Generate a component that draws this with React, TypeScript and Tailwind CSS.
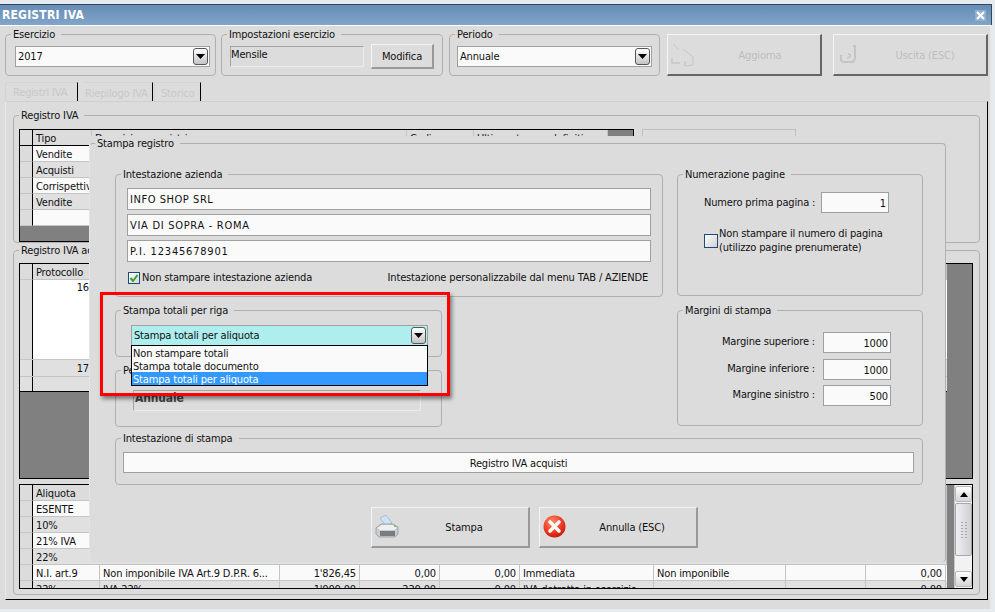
import React from "react";

const font = { fontFamily: '"DejaVu Sans Condensed", "DejaVu Sans", sans-serif', fontStretch: "condensed" as const };

function Group({ label, className, children }: { label: string; className: string; children?: React.ReactNode }) {
  return (
    <div className={"relative border border-[#b0b0b0] rounded-[4px] shrink-0 " + className}>
      <span className="absolute left-[5px] top-[-8px] bg-[#dcdcdc] pl-[2px] pr-[6px] leading-[16px] whitespace-nowrap text-[#111]">{label}</span>
      {children}
    </div>
  );
}

function Arrow() {
  return (
    <span className="flex w-[15px] h-[17px] shrink-0 items-center justify-center rounded-[3px] border border-[#555] bg-gradient-to-b from-white to-[#c4c4c8]">
      <svg width="9" height="5" viewBox="0 0 9 5"><path d="M0 0h9L4.5 5z" fill="#000" /></svg>
    </span>
  );
}

function Combo({ value, className, bg = "bg-[#fafafa]" }: { value: string; className: string; bg?: string }) {
  return (
    <div className={"flex items-center justify-between h-[21px] border border-[#a0a0a0] pl-[2px] pr-[1px] " + bg + " " + className}>
      <span className="leading-[16px] pt-[1px] text-[#111]">{value}</span>
      <Arrow />
    </div>
  );
}

function Input({ value, className }: { value: string; className: string }) {
  return (
    <div className={"h-[21px] border border-[#a0a0a0] bg-[#fafafa] px-[2px] leading-[21px] text-[#111] whitespace-nowrap overflow-hidden " + className}>{value}</div>
  );
}

function Btn({ label, className, icon, disabled }: { label: string; className: string; icon?: React.ReactNode; disabled?: boolean }) {
  return (
    <div
      className={
        "relative flex items-center justify-center shrink-0 bg-[#dcdcdc] border-t border-l border-t-[#f4f4f4] border-l-[#f4f4f4] border-b-2 border-r-2 " +
        (disabled ? "border-b-[#666] border-r-[#666] text-[#bcbcbc] " : "border-b-[#999] border-r-[#999] text-[#111] ") +
        className
      }
    >
      {icon}
      <span className="leading-[16px] pt-[2px]">{label}</span>
    </div>
  );
}

type Cell = { t?: string; r?: boolean };

function Row({ cells, widths, odd, last }: { cells: Cell[]; widths: string[]; odd?: boolean; last?: boolean }) {
  return (
    <div className={"flex h-[16px] shrink-0 " + (odd ? "bg-[#fafafa]" : "bg-[#e0e0e0]")}>
      <div className="w-[13px] shrink-0 bg-[#dcdcdc] border-r border-r-black border-b border-b-[#c4c4c4]" />
      {cells.map((c, i) => (
        <div
          key={i}
          className={
            "shrink-0 border-r border-[#c4c4c4] px-[3px] leading-[17px] overflow-hidden whitespace-nowrap " +
            (last ? "" : "border-b ") +
            (c.r ? "text-right " : "") +
            widths[i]
          }
        >
          {c.t}
        </div>
      ))}
    </div>
  );
}

function Header({ labels, widths, dark }: { labels: string[]; widths: string[]; dark?: boolean }) {
  return (
    <div className="flex h-[16px] shrink-0 bg-[#dcdcdc]">
      <div className={"w-[13px] shrink-0 border-r border-r-black border-b " + (dark ? "border-b-black" : "border-b-[#c4c4c4]")} />
      {labels.map((l, i) => (
        <div key={i} className={"shrink-0 border-r border-r-[#c4c4c4] border-b px-[3px] leading-[17px] whitespace-nowrap overflow-hidden " + (dark ? "border-b-black " : "border-b-[#c4c4c4] ") + widths[i]}>{l}</div>
      ))}
    </div>
  );
}

const w3 = ["w-[67px]", "w-[180px]", "w-[80px]", "w-[80px]", "w-[80px]", "w-[134px]", "w-[132px]", "w-[80px]", "w-[80px]"];

function PrinterIcon() {
  return (
    <svg className="absolute left-[3px] top-[7px]" width="24" height="24" viewBox="0 0 24 24">
      <path d="M5 3l6-3 6 8-6 3z" fill="#cfe3f8" stroke="#8aa4c0" strokeWidth=".6" />
      <path d="M1 13l5-4h12l5 3v7l-3 3H4l-3-3z" fill="#c9cdd0" stroke="#8a8f94" strokeWidth=".7" />
      <path d="M2 13l5-3h11l4 3-3 2H5z" fill="#eef0f2" />
      <path d="M5 16h15v5H5z" fill="#787d82" />
      <circle cx="20" cy="11" r="1" fill="#5cc24a" />
    </svg>
  );
}

function CancelIcon() {
  return (
    <svg className="absolute left-[3px] top-[7px]" width="23" height="23" viewBox="0 0 23 23">
      <defs>
        <radialGradient id="rd" cx="40%" cy="30%" r="75%">
          <stop offset="0" stopColor="#ff8a6a" />
          <stop offset="0.6" stopColor="#ee3a24" />
          <stop offset="1" stopColor="#c01808" />
        </radialGradient>
      </defs>
      <circle cx="11.5" cy="11.5" r="11" fill="url(#rd)" />
      <path d="M7 7l9 9M16 7l-9 9" stroke="#fff8f0" strokeWidth="3.6" strokeLinecap="round" />
    </svg>
  );
}

export default function App() {
  return (
    <div className="relative w-[995px] h-[612px] overflow-hidden bg-[#e6ebf0] pt-[4px] text-[11px] tracking-[-0.16px] text-[#111]" style={font}>
      <div className="w-[992px] h-[605px] border-t border-t-[#33475c] flex flex-col">
        {/* title */}
        <div className="flex items-center justify-between h-[20px] shrink-0 bg-gradient-to-b from-[#678db6] to-[#82a5c8] border-r border-r-[#33475c] pl-[2px] pr-[5px]">
          <span className="text-white font-bold text-[12px] leading-[22px] tracking-[0.2px]">REGISTRI IVA</span>
          <span className="flex items-center justify-center w-[11px] h-[11px] bg-[#8fb0d0]">
            <svg width="9" height="9" viewBox="0 0 9 9"><path d="M1 1l7 7M8 1L1 8" stroke="#fff" strokeWidth="2.2" /></svg>
          </span>
        </div>
        {/* body */}
        <div className="flex-1 flex flex-col bg-[#dcdcdc] border-t border-t-white pl-[5px] border-r-2 border-r-[#e8e8e8]">
          <div className="flex mt-[8px] h-[42px] shrink-0">
            <Group label="Esercizio" className="w-[211px] h-[42px] pl-[9px] pt-[11px]">
              <Combo value="2017" className="w-[195px]" />
            </Group>
            <Group label="Impostazioni esercizio" className="ml-[5px] w-[222px] h-[42px] flex pl-[8px] pt-[11px]">
              <div className="w-[134px] h-[21px] border border-[#a4a4a4] border-b-[#ececec] border-r-[#ececec] leading-[16px]">Mensile</div>
              <Btn label="Modifica" className="ml-[7px] mt-[-2px] w-[63px] h-[25px]" />
            </Group>
            <Group label="Periodo" className="ml-[6px] w-[211px] h-[42px] pl-[7px] pt-[11px]">
              <Combo value="Annuale" className="w-[195px]" />
            </Group>
            <Btn
              disabled
              label="Aggiorna"
              className="ml-[7px] w-[155px] h-[42px] pl-[32px]"
              icon={
                <svg className="absolute left-[3px] top-[8px]" width="25" height="24" viewBox="0 0 25 24" fill="none" stroke="#c6c6c6">
                  <path d="M2 1l5 5M12 6l10 8v8l-8 1" />
                  <path d="M1 15v5h8M14 23v-5" strokeWidth="1.4" />
                </svg>
              }
            />
            <Btn
              disabled
              label="Uscita (ESC)"
              className="ml-[11px] w-[155px] h-[42px] pl-[30px]"
              icon={
                <svg className="absolute left-[5px] top-[10px]" width="20" height="18" viewBox="0 0 20 18" fill="none" stroke="#c4c4c4">
                  <path d="M14 1h2v13l-2 3H4l-2-2v-5" strokeWidth="2" />
                  <path d="M9 9c2 0 3 1 2 3l-3 1" strokeWidth="1.5" />
                </svg>
              }
            />
          </div>
          {/* tabs */}
          <div className="flex h-[19px] mt-[6px] shrink-0 text-[#c8c8c8] leading-[16px]">
            <div className="w-[73px] border-t border-l border-[#d4d4d4] rounded-tl-[4px] border-r border-r-black pl-[7px] pt-[2px] whitespace-nowrap">Registri IVA</div>
            <div className="ml-[6px] w-[69px] border-t border-[#d4d4d4] border-r border-r-black pl-[1px] pt-[3px] whitespace-nowrap">Riepilogo IVA</div>
            <div className="ml-[1px] w-[47px] border-t border-l border-[#d4d4d4] border-r border-r-black pl-[6px] pt-[3px]">Storico</div>
          </div>
          {/* tab panel */}
          <div className="w-[983px] h-[499px] shrink-0 border-t border-t-[#d0d0d0] border-l border-l-[#e8e8e8] border-r border-r-black border-b border-b-black">
            <Group label="Registro IVA" className="ml-[7px] mt-[13px] w-[967px] h-[128px] flex pl-[5px] pt-[13px]">
              <div className="w-[615px] h-[113px] border border-black flex overflow-hidden">
                <div className="w-[588px] shrink-0 flex flex-col">
                  <Header dark labels={["Tipo", "Descrizione registri", "Codice", "Ultima stampa definitiva"]} widths={["w-[59px]", "w-[315px]", "w-[67px]", "w-[134px]"]} />
                  {["Vendite", "Acquisti", "Corrispettivi", "Vendite", ""].map((t, i) => (
                    <Row key={i} odd={i % 2 === 0} cells={[{ t }]} widths={["w-[575px]"]} />
                  ))}
                  <div className="flex-1 bg-[#808080]" />
                </div>
                <div className="flex-1 bg-[#808080]" />
              </div>
              <div className="ml-[8px] w-[154px] h-[30px] border border-[#c0c0c0] border-b-0" />
            </Group>
            <Group label="Registro IVA acquisti" className="ml-[7px] mt-[7px] w-[967px] h-[345px] pl-[5px] pt-[12px]">
              <div className="w-[954px] h-[216px] border border-black flex overflow-hidden">
                <div className="w-[927px] shrink-0 flex flex-col">
                  <Header labels={["Protocollo"]} widths={["w-[914px]"]} />
                  <div className="flex h-[79px] shrink-0 bg-white">
                    <div className="w-[13px] bg-[#dcdcdc] border-r border-r-black" />
                    <div className="w-[56px] text-right leading-[15px]">16</div>
                  </div>
                  <div className="flex h-[17px] shrink-0 bg-[#e0e0e0] border-t border-[#c4c4c4]">
                    <div className="w-[13px] border-r border-r-black" />
                    <div className="w-[56px] text-right leading-[17px]">17</div>
                  </div>
                  <div className="flex h-[16px] shrink-0 bg-[#e0e0e0] border-t border-[#c4c4c4] border-b border-b-black">
                    <div className="w-[13px] border-r border-r-black" />
                  </div>
                  <div className="flex-1 bg-[#808080]" />
                </div>
                <div className="flex-1 bg-[#808080]" />
              </div>
              <div className="mt-[5px] w-[954px] h-[105px] border border-black flex overflow-hidden">
                <div className="w-[927px] shrink-0 flex flex-col">
                  <Header labels={["Aliquota"]} widths={["w-[914px]"]} />
                  <Row odd cells={[{ t: "ESENTE" }]} widths={["w-[914px]"]} />
                  <Row cells={[{ t: "10%" }]} widths={["w-[914px]"]} />
                  <Row odd cells={[{ t: "21% IVA" }]} widths={["w-[914px]"]} />
                  <Row cells={[{ t: "22%" }]} widths={["w-[914px]"]} />
                  <Row
                    odd
                    widths={w3}
                    cells={[
                      { t: "N.I. art.9" },
                      { t: "Non imponibile IVA Art.9 D.P.R. 6..." },
                      { t: "1'826,45", r: true },
                      { t: "0,00", r: true },
                      { t: "0,00", r: true },
                      { t: "Immediata" },
                      { t: "Non imponibile" },
                      { t: "" },
                      { t: "0,00", r: true },
                    ]}
                  />
                  <Row
                    last
                    widths={w3}
                    cells={[
                      { t: "22%" },
                      { t: "IVA 22%" },
                      { t: "1'000,00", r: true },
                      { t: "220,00", r: true },
                      { t: "0,00", r: true },
                      { t: "IVA detratta in esercizio" },
                      { t: "" },
                      { t: "" },
                      { t: "0,00", r: true },
                    ]}
                  />
                </div>
                <div className="w-[7px] shrink-0 bg-[#808080]" />
                <div className="flex-1 flex flex-col bg-[#f2f2f2] py-[1px] border-l border-[#c8c8c8]">
                  <div className="h-[16px] shrink-0 flex items-center justify-center bg-gradient-to-b from-white to-[#d4d4d8] border border-[#b8b8b8] rounded-[2px]">
                    <svg width="8" height="5" viewBox="0 0 8 5"><path d="M0 5h8L4 0z" fill="#000" /></svg>
                  </div>
                  <div className="h-[53px] shrink-0 mt-[1px] flex items-center justify-center bg-gradient-to-r from-[#f0f0f2] to-[#cfcfd4] border border-[#a8a8a8] rounded-[2px]">
                    <div className="grid grid-cols-2 gap-x-[2px] gap-y-[2px]">
                      {Array.from({ length: 12 }).map((_, i) => (
                        <span key={i} className="w-[2px] h-[1px] bg-[#a8a8a8]" />
                      ))}
                    </div>
                  </div>
                  <div className="flex-1" />
                  <div className="h-[16px] shrink-0 flex items-center justify-center bg-gradient-to-b from-white to-[#d4d4d8] border border-[#b8b8b8] rounded-[2px]">
                    <svg width="8" height="5" viewBox="0 0 8 5"><path d="M0 0h8L4 5z" fill="#000" /></svg>
                  </div>
                </div>
              </div>
            </Group>
          </div>
        </div>
      </div>

      {/* modal dialog */}
      <div className="absolute left-[89px] top-[136px] w-[857px] h-[426px] bg-[#dcdcdc] rounded-bl-[6px] pt-[7px]">
        <Group label="Stampa registro" className="w-[857px] h-[419px] border-b-0 border-l-[#e4e4e4] rounded-bl-[6px] pl-[25px] pt-[30px]">
          <div className="flex">
            <div className="w-[548px] flex flex-col">
              <Group label="Intestazione azienda" className="h-[123px] pl-[11px] pt-[13px] flex flex-col">
                <Input value="INFO SHOP SRL" className="w-[524px] h-[22px] leading-[22px] tracking-[0.55px]" />
                <Input value="VIA DI SOPRA - ROMA" className="w-[524px] h-[22px] mt-[4px] leading-[22px] tracking-[0.7px]" />
                <Input value="P.I. 12345678901" className="w-[524px] h-[22px] mt-[4px] leading-[22px] tracking-[0.8px]" />
                <div className="flex items-center justify-between mt-[7px] w-[521px] pl-[1px]">
                  <div className="flex items-center">
                    <span className="flex items-center justify-center w-[12px] h-[12px] border border-[#1f4a7a] bg-gradient-to-br from-white to-[#d8d8d8]">
                      <svg width="10" height="10" viewBox="0 0 10 10"><path d="M1.5 5l2.5 3 4.5-6" fill="none" stroke="#2fa52f" strokeWidth="2" /></svg>
                    </span>
                    <span className="ml-[2px] leading-[16px] pt-[1px]">Non stampare intestazione azienda</span>
                  </div>
                  <span className="leading-[16px]">Intestazione personalizzabile dal menu TAB / AZIENDE</span>
                </div>
              </Group>
              <Group label="Stampa totali per riga" className="mt-[13px] w-[327px] h-[47px] pl-[15px] pt-[14px]">
                <Combo value="Stampa totali per aliquota" className="w-[297px]" bg="bg-[#aeeeee]" />
              </Group>
              <Group label="Periodo di stampa" className="mt-[13px] w-[327px] h-[57px] pl-[17px] pt-[19px]">
                <div className="w-[288px] h-[21px] border border-[#a4a4a4] border-b-[#ececec] border-r-[#ececec] font-bold text-[12px] text-[#444] pl-[1px] leading-[14px]">Annuale</div>
              </Group>
            </div>
            <div className="ml-[14px] w-[246px] flex flex-col">
              <Group label="Numerazione pagine" className="h-[122px] pl-[26px] pt-[17px]">
                <div className="flex items-center">
                  <span className="w-[117px] leading-[16px] pt-[1px] whitespace-nowrap">Numero prima pagina :</span>
                  <Input value="1" className="w-[68px] text-right" />
                </div>
                <div className="flex items-center mt-[14px]">
                  <span className="w-[14px] h-[14px] shrink-0 border border-[#1f4a7a] bg-gradient-to-br from-white to-[#d0d0d0]" />
                  <span className="ml-[1px] leading-[14px] whitespace-nowrap">
                    Non stampare il numero di pagina
                    <br />
                    (utilizzo pagine prenumerate)
                  </span>
                </div>
              </Group>
              <Group label="Margini di stampa" className="mt-[14px] h-[116px] pl-[26px] pt-[21px] flex flex-col">
                {[
                  ["Margine superiore :", "1000", ""],
                  ["Margine inferiore :", "1000", "mt-[6px]"],
                  ["Margine sinistro :", "500", "mt-[5px]"],
                ].map(([l, v, m]) => (
                  <div key={l} className={"flex items-center " + m}>
                    <span className="w-[111px] text-right leading-[16px] mt-[-1px]">{l}</span>
                    <Input value={v} className="ml-[8px] w-[68px] text-right" />
                  </div>
                ))}
              </Group>
            </div>
          </div>
          <Group label="Intestazione di stampa" className="mt-[11px] w-[808px] h-[47px] pl-[7px] pt-[13px]">
            <Input value="Registro IVA acquisti" className="w-[791px] text-center" />
          </Group>
          <div className="flex mt-[22px] ml-[256px]">
            <Btn label="Stampa" className="w-[159px] h-[41px] pl-[28px]" icon={<PrinterIcon />} />
            <Btn label="Annulla (ESC)" className="ml-[9px] w-[159px] h-[41px] pl-[28px]" icon={<CancelIcon />} />
          </div>
        </Group>
      </div>

      {/* dropdown list */}
      <div className="absolute left-[131px] top-[345px] w-[297px] h-[41px] border border-black bg-[#fafafa] leading-[15px]">
        <div className="h-[13px] pl-[1px]">Non stampare totali</div>
        <div className="h-[13px] pl-[1px]">Stampa totale documento</div>
        <div className="h-[13px] pl-[1px] bg-[#3399ff] text-white">Stampa totali per aliquota</div>
      </div>

      {/* red highlight */}
      <div className="absolute left-[100px] top-[292px] w-[350px] h-[104px] border-[3px] border-[#ff0000] shadow-[2px_3px_4px_rgba(0,0,0,0.45)]" />
    </div>
  );
}
